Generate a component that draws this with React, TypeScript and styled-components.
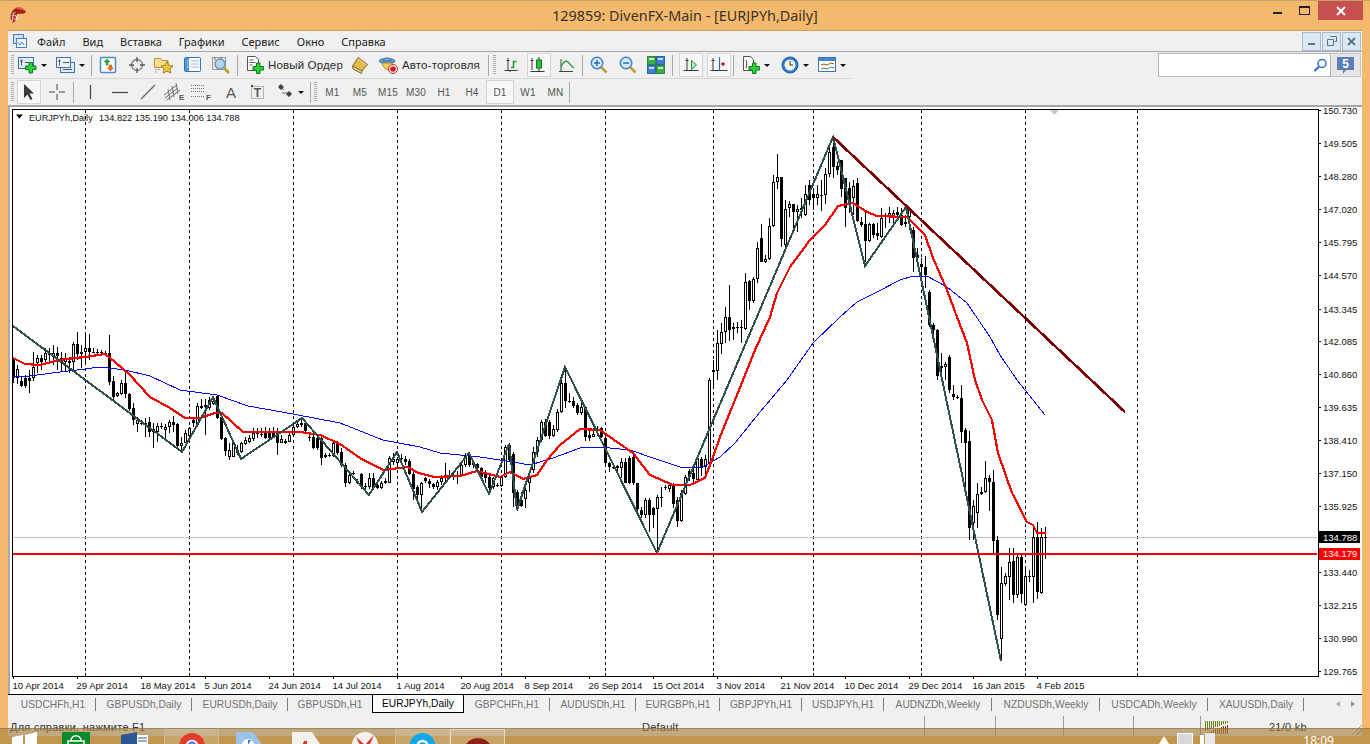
import * as React from 'react'
import { FC, ReactNode } from 'react'
import styled, { createGlobalStyle } from 'styled-components'

const GlobalStyle = createGlobalStyle`
  html, body {
    margin: 0;
    padding: 0;
    overflow: hidden;
    background: #f3b96c;
  }
`

const Page = styled.div`
  position: relative;
  width: 1370px;
  height: 744px;
  overflow: hidden;
  display: flex;
  flex-direction: column;
  background: #f3b96c;
  font-family: "Liberation Sans", Arial, sans-serif;
  color: #222;
`

const TitleBar = styled.header`
  height: 29px;
  flex: none;
  border-top: 1px solid #c9a066;
  display: grid;
  grid-template-columns: 1fr auto 1fr;
  align-items: start;
  padding: 0 7px;
`

const TitleLogo = styled.div`
  padding: 5px 0 0 2px;
`

const TitleText = styled.div`
  font-family: "Noto Sans", sans-serif;
  font-size: 14.4px;
  line-height: 29px;
  color: #3a3128;
`

const WindowButtons = styled.div`
  display: flex;
  justify-content: flex-end;
  align-items: flex-start;
`

const WindowButton = styled.div<{ $close?: boolean }>`
  width: ${p => (p.$close ? 45 : 27)}px;
  height: 19px;
  display: flex;
  align-items: center;
  justify-content: center;
  background: ${p => (p.$close ? '#c75050' : 'transparent')};
`

const AppBody = styled.div`
  height: 706px;
  flex: none;
  margin: 0 8px;
  display: flex;
  flex-direction: column;
  background: #f0f0f0;
`

const MenuBar = styled.nav`
  height: 20px;
  flex: none;
  border-top: 1px solid #c9a066;
  border-bottom: 1px solid #a6a6a6;
  display: flex;
  align-items: center;
  gap: 17px;
  padding: 0 1px 0 5px;
  font-family: "Noto Sans", sans-serif;
  font-size: 11px;
`

const MenuLogo = styled.div`
  display: flex;
  margin-right: -7px;
`

const MdiButtons = styled.div`
  margin-left: auto;
  display: flex;
  gap: 1px;
`

const MdiButton = styled.div`
  width: 17px;
  height: 17px;
  border: 1px solid #a9bccd;
  background: #dbe7f2;
  display: flex;
  align-items: center;
  justify-content: center;
`

const ToolRow = styled.div<{ $h: number }>`
  height: ${p => p.$h}px;
  flex: none;
  display: flex;
  align-items: stretch;
`

const ToolGroup = styled.div<{ $line?: boolean }>`
  display: flex;
  align-items: center;
  border-bottom: ${p => (p.$line ? '1px solid #d6d6d6' : '0')};
`

const Grip = styled.div`
  width: 8px;
  height: 20px;
  flex: none;
  background: repeating-linear-gradient(to bottom, #b0b0b0 0 1px, transparent 1px 2px) 3px 0 / 3px 100% no-repeat;
`

const ToolSep = styled.div<{ $w?: number }>`
  width: ${p => p.$w ?? 2}px;
  height: 21px;
  flex: none;
  display: flex;
  justify-content: center;
  &::after {
    content: '';
    width: 1px;
    background: #a8a8a8;
  }
`

const ToolButton = styled.div<{ $w: number; $pressed?: boolean }>`
  width: ${p => p.$w}px;
  height: 100%;
  flex: none;
  display: flex;
  align-items: center;
  justify-content: center;
  gap: 4px;
  position: relative;
  &::before {
    content: ${p => (p.$pressed ? "''" : 'none')};
    position: absolute;
    inset: 1px ${p => Math.max(0, (p.$w - 24) / 2)}px 1px;
    background: #f6f6f6;
    border: 1px solid #d4d4d4;
    box-shadow: inset 0 0 0 1px #fafafa;
  }
  & > * {
    position: relative;
  }
`

const Caret = styled.span`
  width: 0;
  height: 0;
  border-left: 3px solid transparent;
  border-right: 3px solid transparent;
  border-top: 3px solid #111;
  flex: none;
`

const LabelButton = styled.div<{ $w: number; $pad: number }>`
  width: ${p => p.$w}px;
  padding-left: ${p => p.$pad}px;
  box-sizing: border-box;
  flex: none;
  display: flex;
  align-items: center;
  gap: 4px;
  font-size: 11.5px;
  letter-spacing: 0.15px;
  color: #2a2a2a;
  white-space: nowrap;
`

const PeriodButton = styled.div<{ $w: number; $pressed?: boolean }>`
  width: ${p => p.$w}px;
  height: 24px;
  box-sizing: border-box;
  flex: none;
  display: flex;
  align-items: center;
  justify-content: center;
  font-size: 10px;
  letter-spacing: 0.2px;
  color: #555;
  background: ${p => (p.$pressed ? '#f6f6f6' : 'transparent')};
  border: 1px solid ${p => (p.$pressed ? '#d4d4d4' : 'transparent')};
`

const SearchArea = styled.div`
  margin-left: auto;
  display: flex;
  align-items: stretch;
  padding: 1px 1px 2px 0;
`

const SearchField = styled.div`
  width: 173px;
  box-sizing: border-box;
  background: #fff;
  border: 1px solid #b4b4b4;
  display: flex;
  align-items: center;
  justify-content: flex-end;
  padding-right: 3px;
`

const NotifyButton = styled.div`
  width: 30px;
  box-sizing: border-box;
  background: #e6e6e6;
  border: 1px solid #c4c4c4;
  border-left: 0;
  display: flex;
  align-items: center;
  justify-content: center;
`

const ToolbarEdge = styled.div`
  height: 2px;
  flex: none;
  background: #a6a6a6;
`

const ChartSvg = styled.svg`
  display: block;
  flex: none;
  overflow: visible;
  font-family: "Liberation Sans", Arial, sans-serif;
`

const TabStrip = styled.div`
  height: 21px;
  flex: none;
  display: flex;
  align-items: flex-start;
  border-top: 1px solid #000;
  padding-left: 2px;
  position: relative;
`

const Tab = styled.div<{ $w: number; $active?: boolean; $sep?: boolean }>`
  width: ${p => p.$w}px;
  height: 18px;
  box-sizing: border-box;
  flex: none;
  position: relative;
  display: flex;
  align-items: center;
  justify-content: center;
  font-size: 10.2px;
  letter-spacing: 0.05px;
  white-space: nowrap;
  color: ${p => (p.$active ? '#000' : '#727272')};
  background: ${p => (p.$active ? '#fff' : 'transparent')};
  border: ${p => (p.$active ? '1px solid #000' : '0')};
  border-top: 0;
  &::after {
    content: ${p => (p.$sep ? "''" : 'none')};
    position: absolute;
    right: 0;
    top: 3px;
    bottom: 2px;
    width: 1px;
    background: #7a7a7a;
  }
`

const TabArrows = styled.div`
  margin-left: auto;
  display: flex;
  gap: 11px;
  padding: 6px 7px 0 0;
`

const TabArrow = styled.span<{ $right?: boolean }>`
  width: 0;
  height: 0;
  border-top: 3.5px solid transparent;
  border-bottom: 3.5px solid transparent;
  ${p => (p.$right ? 'border-left: 4px solid #8a8a8a;' : 'border-right: 4px solid #a8a8a8;')}
`

const StatusBar = styled.footer`
  height: 20px;
  flex: none;
  display: flex;
  align-items: stretch;
  position: relative;
  font-size: 11px;
  letter-spacing: 0.25px;
  color: #333;
`

const StatusCell = styled.div<{ $w: number; $pad?: number; $sep?: boolean }>`
  width: ${p => p.$w}px;
  box-sizing: border-box;
  flex: none;
  padding: 3px 0 0 ${p => p.$pad ?? 2}px;
  line-height: 16px;
  display: flex;
  align-items: flex-start;
  white-space: nowrap;
  border-right: ${p => (p.$sep ? '1px solid #9a9a9a' : '0')};
`

const Meter = styled.div`
  display: flex;
  margin-top: 2px;
`

const Traffic = styled.span`
  margin-left: 40px;
`

const ResizeGrip = styled.div`
  position: absolute;
  right: 0;
  bottom: 1px;
  width: 13px;
  height: 13px;
  background: repeating-linear-gradient(135deg, transparent 0 2px, #9d9d9d 2px 3px);
  clip-path: polygon(100% 0, 100% 100%, 0 100%);
`

const Taskbar = styled.div`
  position: absolute;
  left: 0;
  right: 0;
  bottom: 0;
  height: 16px;
  overflow: hidden;
  display: flex;
  align-items: flex-start;
  background: rgba(166, 130, 65, 0.65);
  border-top: 1px solid rgba(120, 90, 50, 0.45);
  box-sizing: border-box;
`

const TaskSlot = styled.div<{ $w: number; $framed?: boolean; $bright?: boolean }>`
  width: ${p => p.$w}px;
  height: 30px;
  box-sizing: border-box;
  flex: none;
  display: flex;
  justify-content: center;
  padding-top: 3px;
  border: ${p => (p.$framed ? `1px solid ${p.$bright ? '#e6d9c4' : '#cdb89a'}` : '0')};
  background: ${p => (p.$framed ? 'rgba(255, 255, 255, 0.14)' : 'transparent')};
`

const Tray = styled.div`
  margin-left: auto;
  display: flex;
  align-items: flex-start;
  gap: 7px;
  padding-right: 36px;
  padding-top: 4px;
`

const Clock = styled.div`
  font-family: "Noto Sans", sans-serif;
  font-size: 12px;
  line-height: 14px;
  color: #fff;
  margin-left: 80px;
  margin-top: 1px;
`

/* ------------ toolbar icons, drawn on an 18 or 20 px box ------------ */

const Ico: FC<{ s?: number; w?: number; children: ReactNode }> = ({ s = 18, w, children }) => (
  <svg width={w ?? s} height={s} viewBox={`0 0 ${w ?? s} ${s}`}>
    {children}
  </svg>
)

const GreenPlus: FC<{ x: number; y: number }> = ({ x, y }) => (
  <path
    transform={`translate(${x} ${y})`}
    d="M4 .5h3.5V4H11v3.5H7.500V11H4V7.500H.5V4H4z"
    fill="#2bd13a"
    stroke="#0c7d1a"
  />
)

const NewChartIcon = () => (
  <Ico w={19}>
    <rect x="0.5" y="1.500" width="15" height="11" fill="#dfeafa" stroke="#3f73b4" />
    <path d="M3.500 3.500v6M2 5h3M7 6.500h6" stroke="#555" fill="none" />
    <GreenPlus x={7} y={6} />
  </Ico>
)

const ProfilesIcon = () => (
  <Ico w={19}>
    <rect x="4.500" y="6.500" width="14" height="10" fill="#dfeafa" stroke="#3f73b4" />
    <rect x="0.5" y="1.500" width="14" height="10" fill="#eef4fc" stroke="#3f73b4" />
    <path d="M3.500 3.500v6M2 5h3M7 6.500h6M7 13.500h9" stroke="#555" fill="none" />
  </Ico>
)

const MarketIcon = () => (
  <Ico>
    <rect x="1.500" y="1.500" width="15" height="15" rx="1" fill="#fff" stroke="#4d8ac8" strokeWidth="1.500" />
    <path d="M7 9V6H5l3-3 3 3H9v3z" fill="#23b53a" stroke="#14802a" strokeWidth=".5" />
    <path d="M10 9v3H8.500l3 3 3-3H13V9z" fill="#f0732a" stroke="#c04e10" strokeWidth=".5" />
  </Ico>
)

const NavIcon = () => (
  <Ico>
    <circle cx="9" cy="9" r="5.500" fill="none" stroke="#777" strokeWidth="1.300" />
    <path d="M9 1v5M9 12v5M1 9h5M12 9h5" stroke="#555" strokeWidth="1.300" />
  </Ico>
)

const FavIcon = () => (
  <Ico w={20}>
    <path d="M.5 2.500h6l1.500 2h6v7H.5z" fill="#f7dc8c" stroke="#b8923a" />
    <path d="M2 13v1M2 15.500v1M5 13v1" stroke="#666" />
    <path d="M13 5.500l1.900 3.900 4.100.6-3 2.900.7 4.200-3.700-2-3.700 2 .7-4.200-3-2.900 4.100-.6z" fill="#f2c63a" stroke="#a67f1e" />
  </Ico>
)

const DataIcon = () => (
  <Ico w={17}>
    <rect x="0.5" y="1.500" width="16" height="14" rx="1" fill="#fff" stroke="#2d73bd" />
    <rect x="1" y="2" width="4" height="13" fill="#4f97d8" />
    <path d="M7 5h8M7 8h8M7 11h8" stroke="#9ab7d6" />
    <path d="M3 5h1M3 8h1M3 11h1" stroke="#fff" />
  </Ico>
)

const TesterIcon = () => (
  <Ico w={19}>
    <rect x="0.5" y="1.500" width="13" height="12" fill="#f1e9dc" stroke="#9a9a9a" />
    <path d="M3 1v3M9 1v3" stroke="#777" />
    <circle cx="8" cy="8" r="5" fill="#b6d3ee" stroke="#6f94b8" strokeWidth="1.500" />
    <path d="M12 12l5 5" stroke="#c59a2c" strokeWidth="2.500" />
  </Ico>
)

const OrderIcon = () => (
  <Ico w={17}>
    <path d="M.5.5h8l3 3v11h-11z" fill="#fff" stroke="#555" />
    <path d="M2.500 4h4M2.500 6.500h6M2.500 9h3" stroke="#555" />
    <GreenPlus x={5.500} y={6.500} />
  </Ico>
)

const BookIcon = () => (
  <Ico>
    <path d="M1.500 10l.5 3 8.500 4.500 .5-2.500" fill="#d6d0b4" stroke="#8c6a1e" />
    <path d="M7 1.500l9.500 7-5.500 6.500L1.500 10z" fill="#e2b94e" stroke="#8c6a1e" />
    <path d="M7 3l7.500 5.500" stroke="#f4dc94" />
  </Ico>
)

const HatIcon = () => (
  <Ico w={19}>
    <ellipse cx="8" cy="5" rx="8" ry="2.500" fill="#5f9ed6" stroke="#3b6fa6" />
    <path d="M4 5c0-4 8-4 8 0z" fill="#6fa9dd" stroke="#3b6fa6" />
    <path d="M3 7c1 7 9 9 13 5l-3-5z" fill="#f3cf58" stroke="#a8862a" />
    <circle cx="14" cy="13" r="4.500" fill="#fff" stroke="#c22" />
    <circle cx="14" cy="13" r="2.800" fill="#d0201c" />
  </Ico>
)

const BarTypeIcon = () => (
  <Ico>
    <path d="M5 2v12M1.500 14.500h13M3.500 4.500h3M7 14v2" stroke="#3a3a3a" fill="none" />
    <path d="M8 11.500h2.500v-6h3" stroke="#1a9a2c" strokeWidth="1.500" fill="none" />
  </Ico>
)

const CandleTypeIcon = () => (
  <Ico>
    <path d="M2 2v12M.5 15.500h14M0.500 4.500h3" stroke="#3a3a3a" fill="none" />
    <path d="M9 1v15" stroke="#222" />
    <rect x="6.500" y="4" width="5" height="8" fill="#28c13c" stroke="#0f7c20" />
  </Ico>
)

const LineTypeIcon = () => (
  <Ico>
    <path d="M3 3v12M1 15.500h14" stroke="#3a4a3a" fill="none" />
    <path d="M3 11c2-5 5-7 7-5s3 4 6 6" stroke="#2b9c46" strokeWidth="1.300" fill="none" />
  </Ico>
)

const Lens: FC<{ plus?: boolean }> = ({ plus }) => (
  <Ico>
    <path d="M10.500 10.500l6 6" stroke="#c79a2a" strokeWidth="2.500" />
    <circle cx="7" cy="7" r="5.700" fill="#d8e9fa" stroke="#3f86cf" strokeWidth="1.600" />
    <path d={plus ? 'M4 7h6M7 4v6' : 'M4 7h6'} stroke="#2a6bb5" strokeWidth="1.500" />
  </Ico>
)

const TileIcon = () => (
  <Ico>
    <rect x="0.5" y="0.5" width="8" height="8" fill="#3fae4a" stroke="#2a8a36" />
    <rect x="9.500" y="0.5" width="8" height="8" fill="#3f7fd2" stroke="#2a62ad" />
    <rect x="0.5" y="9.500" width="8" height="8" fill="#3f7fd2" stroke="#2a62ad" />
    <rect x="9.500" y="9.500" width="8" height="8" fill="#3fae4a" stroke="#2a8a36" />
    <path d="M2 3h5M11 3h5M2 12h5M11 12h5" stroke="#fff" strokeWidth="1.500" />
  </Ico>
)

const ScrollIcon = () => (
  <Ico>
    <path d="M5 2v12M1.500 14.500h15M3.500 4.500h3" stroke="#3a3a3a" fill="none" />
    <path d="M9.500 4.500l5 4.500-5 4.500z" fill="#b9efc0" stroke="#189a2e" />
  </Ico>
)

const ShiftIcon = () => (
  <Ico>
    <path d="M3 2v12M.5 14.500h17M1.500 4.500h3" stroke="#3a3a3a" fill="none" />
    <path d="M9.500 1v14" stroke="#2d6fbf" strokeWidth="1.200" />
    <path d="M11 8h4M13 6v4" stroke="#b4281e" strokeWidth="1.500" />
  </Ico>
)

const AddIndicatorIcon = () => (
  <Ico w={17}>
    <path d="M.5.5h7l3 3v11H.5z" fill="#fff" stroke="#555" />
    <path d="M3 4c1 2 1 5 0 8" stroke="#333" fill="none" />
    <GreenPlus x={5.500} y={6.500} />
  </Ico>
)

const ClockIcon = () => (
  <Ico>
    <circle cx="9" cy="9" r="8" fill="#2a80d0" stroke="#1a5a9e" />
    <circle cx="9" cy="9" r="5.500" fill="#f7f2e6" />
    <path d="M9 5v4h3" stroke="#333" fill="none" />
  </Ico>
)

const TemplateIcon = () => (
  <Ico>
    <rect x="0.5" y="1.500" width="17" height="14" fill="#fff" stroke="#3f73b4" />
    <rect x="1" y="2" width="16" height="3" fill="#3f86cf" />
    <path d="M3 9l3-1 3 1 4-2 3 1" stroke="#b5431e" fill="none" />
    <path d="M3 13l3-1 3 1 4-2 3 1" stroke="#2b9c46" fill="none" />
  </Ico>
)

const CursorIcon = () => (
  <Ico>
    <path d="M4 1v14l3.500-3.500 3 5.500 2-1-3-5.500H14z" fill="#3a3a3a" />
  </Ico>
)

const CrossIcon = () => (
  <Ico>
    <path d="M9 1v6M9 11v6M1 9h6M11 9h6" stroke="#444" />
  </Ico>
)

const VLineIcon = () => (
  <Ico>
    <path d="M9.500 2v14" stroke="#444" strokeWidth="1.200" />
  </Ico>
)

const HLineIcon = () => (
  <Ico>
    <path d="M1 9.500h16" stroke="#444" strokeWidth="1.200" />
  </Ico>
)

const TrendIcon = () => (
  <Ico>
    <path d="M2 16L16 2" stroke="#666" strokeWidth="1.200" />
  </Ico>
)

const FibChannelIcon = () => (
  <Ico w={24} s={20}>
    <path d="M2 13L15 3M3 16L16 6M5 18L18 8" stroke="#666" />
    <path d="M6 7l2 11M10 4l2 11M14 1l2 11" stroke="#777" />
    <text x="17" y="18" fontSize="8" fontWeight="700" fill="#555" fontFamily="Liberation Sans">E</text>
  </Ico>
)

const FibLinesIcon = () => (
  <Ico w={22} s={20}>
    <path d="M0 3.500h14M0 6.500h14M0 9.500h14M0 14.500h14" stroke="#777" strokeDasharray="1 1" />
    <text x="15" y="18" fontSize="8" fontWeight="700" fill="#555" fontFamily="Liberation Sans">F</text>
  </Ico>
)

const LetterIcon = () => (
  <Ico>
    <text x="9" y="15" textAnchor="middle" fontSize="15" fontWeight="400" fill="#555" fontFamily="Liberation Sans">A</text>
  </Ico>
)

const LabelIcon = () => (
  <Ico>
    <rect x="2.500" y="3.500" width="12" height="12" fill="none" stroke="#777" strokeDasharray="1 1" />
    <path d="M2 2h2v2H2z" fill="#444" />
    <text x="8.500" y="14" textAnchor="middle" fontSize="12" fontWeight="700" fill="#555" fontFamily="Liberation Sans">T</text>
  </Ico>
)

const MoreToolsIcon = () => (
  <Ico w={16}>
    <path d="M1 2l5 5M4 10h9" stroke="#666" strokeWidth="1" />
    <path d="M3 1l3 3-3 3-3-3zM11 8l3 3-3 3-3-3z" fill="#444" />
  </Ico>
)

const MtLogo = () => (
  <svg width="18" height="19" viewBox="0 0 18 19">
    <path d="M3 6C5 1 13 0 17 6c-3 3-6 1-9 2 0 4-2 8-4 9C1 14 1 10 3 6z" fill="#a8201c" />
    <path d="M6 2c3-2 8-1 10 3-3-1-7-2-10-3z" fill="#d9605a" />
    <text x="2.500" y="14" fontSize="10" fontStyle="italic" fill="#fff" fontFamily="Liberation Serif">fx</text>
  </svg>
)

const ChildWinIcon = () => (
  <svg width="14" height="15" viewBox="0 0 14 15">
    <rect x="0.5" y="0.5" width="10" height="9" fill="#cfe0f4" stroke="#4a7fbe" />
    <rect x="3.500" y="4.500" width="10" height="9" fill="#eef4fb" stroke="#4a7fbe" />
    <path d="M5 9l2 2 2-3 2 3" stroke="#4a7fbe" fill="none" />
  </svg>
)

const SearchGlass = () => (
  <svg width="14" height="15" viewBox="0 0 14 15">
    <circle cx="9" cy="5.500" r="4" fill="#fff" stroke="#2f6fd0" strokeWidth="1.500" />
    <path d="M6 8.500L1.500 13" stroke="#2f6fd0" strokeWidth="2.200" />
  </svg>
)

const NotifyBubble = () => (
  <svg width="17" height="19" viewBox="0 0 17 19">
    <path d="M0 1h17v13H9l-3 4v-4H0z" fill="#5b7db8" />
    <text x="8.500" y="11.500" textAnchor="middle" fontSize="12" fontWeight="700" fill="#fff" fontFamily="Liberation Sans">5</text>
  </svg>
)

const BarsMeter = () => (
  <svg width="24" height="13" viewBox="0 0 24 13" shapeRendering="crispEdges">
    {Array.from({ length: 12 }, (_, i) => (
      <g key={i}>
        <rect x={i * 2} y="0" width="1" height={Math.max(2, 10 - i * 0.75)} fill="#5f7f10" />
        <rect x={i * 2} y={12 - i * 0.75} width="1" height={i * 0.75 + 1} fill="#9c2c10" />
      </g>
    ))}
  </svg>
)

/* ------------ chart data, read off the capture in real pixels ------------ */

type Row = [number, number, number, number, number]

// [body top, body bottom, high, low, black] in thirds of a pixel from a base line
const firstLeg: Row[] = [
  [150,205,145,218,1],[178,205,165,222,0],[213,228,200,232,1],[205,228,195,235,1],[203,213,180,248,1],[170,205,125,213,0],
  [145,160,135,190,0],[145,155,135,180,1],[130,150,115,160,0],[130,135,115,160,0],[130,137,105,165,0],[130,138,110,180,1],
  [145,155,125,183,1],[148,155,130,185,0],[152,160,140,190,1],[103,157,95,185,0],[103,133,67,150,1],[125,133,105,175,0],
  [115,125,75,155,0],[115,125,72,150,1],[125,125,115,130,1],[125,130,118,135,1],[127,127,120,133,1],[130,130,122,136,1],
  [130,215,75,225,1],[213,262,198,275,1],[250,258,245,262,0],[218,252,210,255,0],[218,252,190,265,1],[252,298,250,303,1],
  [295,330,280,345,1],[330,342,322,365,0],[340,340,330,346,1],[340,345,325,380,1],[335,365,320,382,1],[358,365,340,415,1],
  [348,365,340,395,0],[347,347,340,356,1],[350,360,342,385,0],[337,350,330,370,0],[337,345,318,365,1],[342,408,340,410,1],
  [398,408,380,425,0],[368,398,360,400,0],[355,378,350,380,0],[330,340,320,350,1],[288,345,280,348,0],[288,293,268,296,0],
  [285,292,268,375,1],[270,295,262,300,0],[272,282,262,286,0],[257,325,255,328,1],[320,388,305,390,1],[385,422,380,437,1],
  [420,440,400,450,0],[400,440,392,442,0],[420,430,405,436,1],[400,427,395,430,0],[390,402,380,405,0],[385,395,375,400,0],
  [368,388,355,392,0],[365,372,355,385,0],[372,372,355,380,1],[365,383,352,386,1],[370,385,355,388,1],[365,380,352,384,1],
  [365,398,355,435,1],[388,398,375,400,0],[393,400,388,402,0],[375,395,370,397,0],[350,375,342,378,0],[342,352,335,355,0],
  [340,345,320,350,0],[340,362,336,365,1],[380,385,372,392,1],[380,415,376,418,1],[385,415,380,420,1],[385,445,382,465,1],
  [435,442,428,445,0],[435,435,430,440,1],[400,438,392,441,0],[400,430,392,435,1],
]

const secondLeg: Row[] = [
  [305,345,295,350,1],[345,398,340,410,1],[375,400,368,403,0],[370,370,362,376,1],[395,395,388,402,1],[372,412,370,416,1],
  [408,412,400,420,1],[385,412,370,416,0],[385,415,368,418,1],[405,415,398,418,1],[400,415,392,418,0],[392,398,385,402,0],
  [325,398,318,400,0],[328,335,310,345,0],[328,340,322,345,0],[325,325,312,340,1],[328,335,318,345,1],[333,372,328,376,1],
  [372,418,366,450,1],[412,435,405,452,1],[400,435,395,480,0],[385,392,382,400,1],[392,403,388,415,1],[403,410,400,418,1],
  [395,410,390,420,0],[385,395,375,405,0],[375,385,338,398,0],[375,375,360,385,1],[378,378,365,390,1],[378,378,362,402,1],
  [345,375,340,380,0],[315,345,310,350,0],[313,345,308,352,1],[340,345,335,355,1],[343,355,338,365,1],[355,380,350,392,1],
  [365,385,360,400,1],[380,415,376,432,1],[385,410,380,416,0],[405,405,400,410,1],[382,408,378,412,0],[290,382,285,385,0],
  [285,330,280,336,1],[312,428,305,470,1],[425,470,420,482,1],[450,468,425,472,1],[420,448,415,475,0],[385,400,378,425,0],
  [305,360,292,370,0],[270,305,262,320,0],[215,270,210,275,0],[215,258,208,262,1],[215,258,210,268,1],[238,258,225,262,0],
  [185,240,178,245,0],[100,185,80,190,0],[100,152,50,175,1],[152,152,130,158,1],[152,168,140,175,1],[165,188,158,195,1],
  [170,188,160,195,0],[170,262,168,272,1],[255,263,235,272,1],[252,260,235,262,0],[240,240,228,258,1],[235,260,230,265,1],
  [265,340,250,345,1],[340,350,335,365,1],[350,350,342,358,1],[348,355,345,375,1],[335,355,325,385,0],[335,398,325,400,1],
  [325,398,318,402,1],[322,400,315,405,1],[400,478,398,482,1],[480,495,472,505,1],[450,495,445,505,0],[450,495,445,545,1],
  [475,495,470,535,1],[442,478,435,600,0],[440,440,412,470,1],[412,412,405,420,1],[405,418,395,425,0],[405,463,398,475,1],
  [450,512,440,530,1],[430,512,420,516,0],[380,432,375,436,0],[362,380,358,392,1],[370,388,355,400,1],[325,390,320,394,0],
  [328,350,320,378,1],[328,352,315,380,0],[90,340,85,350,0],[60,65,30,112,0],
]

const thirdLeg: Row[] = [
  [640,722,600,750,0],[605,643,580,672,0],[560,607,530,640,0],[560,600,465,632,1],[590,598,580,630,0],[590,590,575,610,1],
  [590,590,570,638,1],[455,597,428,600,0],[453,512,450,540,1],[448,512,440,520,0],[355,448,335,460,0],[325,395,283,395,1],
  [388,395,375,398,0],[287,388,265,390,0],[155,287,135,290,0],[140,155,72,177,0],[140,328,140,350,1],[237,345,210,360,0],
  [222,235,213,260,0],[222,245,222,300,1],[238,245,225,305,0],[235,240,205,265,1],[193,255,165,258,0],[165,210,150,225,1],
  [193,205,175,240,1],[193,203,165,225,0],[195,195,150,242,1],[133,195,115,222,0],[65,133,45,140,0],[50,110,22,145,1],
  [108,120,95,135,1],[90,177,90,200,1],[145,235,145,290,1],[175,225,155,250,1],[168,205,150,255,0],[160,272,145,275,1],
  [275,285,262,290,1],[283,333,245,395,1],[283,333,280,335,0],[283,315,280,325,1],[310,318,280,330,1],[265,322,235,325,0],
  [258,262,250,295,1],[250,258,232,280,0],[250,258,240,285,0],[247,255,232,265,1],[255,285,235,288,1],[275,283,255,290,1],
  [240,262,230,300,0],[300,383,290,425,1],[375,383,355,400,1],[402,412,385,470,1],[412,435,378,475,1],[487,585,480,590,1],
  [585,600,580,630,1],[600,738,598,750,1],[708,714,670,750,0],[703,712,695,750,0],
]

const lastLeg: Row[] = [
  [-70,30,-75,40,1],[43,52,15,60,1],[50,53,45,58,1],[55,155,15,190,1],[150,190,145,330,1],[183,445,153,480,1],
  [378,430,360,480,0],[343,400,310,445,0],[335,343,320,345,0],[295,337,243,340,0],[295,307,285,392,1],[306,482,270,520,1],
  [480,705,468,720,1],[610,778,560,843,0],[588,612,580,618,0],[545,590,505,660,0],[543,645,505,668,1],[531,645,520,655,0],
  [531,643,520,668,1],[588,675,568,678,0],[588,590,570,605,1],[471,590,440,668,0],[471,637,427,657,1],[471,638,445,642,0],
  [471,473,440,536,1],
]

const fromThirds = (base: number, rows: Row[]) =>
  rows.map(([t, b, h, l, k]) => ({
    top: Math.round(base + t / 3),
    bottom: Math.round(base + b / 3),
    high: Math.round(base + h / 3),
    low: Math.round(base + l / 3),
    black: k === 1,
  }))

const candles = [
  ...fromThirds(310, firstLeg),
  ...fromThirds(350, secondLeg),
  ...fromThirds(130, thirdLeg),
  ...fromThirds(380, lastLeg),
]

const toPoints = (pts: number[][]) => pts.map(p => p.join(',')).join(' ')

const zigzag = [
  [13,326],[182,452],[213,397],[241,459],[302,418],[369,495],[397,452],[422,512],[469,453],[489,494],[509,444],[517,510],
  [565,367],[657,553],[833,137],[865,266],[906,207],[1001,661],
]

const fastMa = [
  [13,358],[25,364],[40,365],[60,360],[75,358],[85,357],[105,354],[115,362],[130,375],[150,397],[170,408],[185,418],
  [200,418],[215,413],[222,413],[243,432],[277,432],[300,432],[320,435],[340,444],[360,458],[383,470],[408,467],[418,473],
  [435,477],[460,476],[477,471],[500,477],[510,472],[523,479],[537,475],[547,460],[560,445],[580,429],[600,430],[617,442],
  [633,453],[650,475],[673,485],[690,485],[705,478],[713,457],[720,437],[743,380],[755,350],[770,317],[777,293],[790,267],
  [810,240],[825,225],[838,206],[853,203],[867,212],[877,216],[907,217],[925,235],[933,258],[947,290],[957,317],[967,343],
  [975,380],[982,400],[992,420],[998,453],[1012,493],[1027,522],[1033,525],[1037,533],[1046,533],
]

const slowMa = [
  [13,377],[30,376],[60,372],[85,369],[100,367],[125,370],[150,376],[180,390],[217,395],[248,406],[293,414],[340,423],
  [383,440],[420,447],[440,453],[480,457],[513,462],[530,465],[553,458],[580,448],[600,447],[630,450],[653,458],[680,467],
  [703,467],[720,457],[735,443],[760,412],[787,380],[813,343],[840,317],[857,302],[877,292],[900,280],[913,276],[927,276],
  [947,287],[967,303],[990,337],[1000,355],[1017,380],[1045,415],
]

const gridX = [85, 189, 293, 397, 501, 605, 713, 813, 921, 1025, 1137]

const priceLabels: [string, number][] = [
  ['150.730',110],['149.505',143],['148.280',176],['147.020',209],['145.795',242],['144.570',275],['143.345',309],
  ['142.085',341],['140.860',374],['139.635',407],['138.410',440],['137.150',473],['135.925',506],['133.440',572],
  ['132.215',605],['130.990',638],['129.765',671],
]

const dateLabels: [string, number][] = [
  ['10 Apr 2014',12],['29 Apr 2014',76],['18 May 2014',140],['5 Jun 2014',204],['24 Jun 2014',268],['14 Jul 2014',332],
  ['1 Aug 2014',396],['20 Aug 2014',460],['8 Sep 2014',524],['26 Sep 2014',588],['15 Oct 2014',652],['3 Nov 2014',716],
  ['21 Nov 2014',780],['10 Dec 2014',844],['29 Dec 2014',908],['16 Jan 2015',972],['4 Feb 2015',1036],
]

const Chart: FC = () => (
  <ChartSvg width="1354" height="587" viewBox="8 107 1354 587">
    <rect x="8" y="107" width="1354" height="587" fill="#fff" />
    <rect x="8" y="107" width="2" height="587" fill="#a9a9a9" />
    <g shapeRendering="crispEdges">
      {gridX.map(x => (
        <line key={x} x1={x + 0.5} x2={x + 0.5} y1="110" y2="675" stroke="#000" strokeDasharray="3 3" />
      ))}
      <line x1="13" x2="1317" y1="537.500" y2="537.500" stroke="#c0c0c0" />
      {candles.map((c, i) => {
        const x = 13 + i * 4
        const h = Math.max(1, c.bottom - c.top)
        return (
          <g key={i}>
            <rect x={x} y={c.high} width="1" height={c.low - c.high} fill="#000" />
            <rect x={x - 1} y={c.top} width="3" height={h} fill="#000" />
            {!c.black && h > 2 && <rect x={x} y={c.top + 1} width="1" height={h - 2} fill="#fff" />}
          </g>
        )
      })}
      <polyline points={toPoints(slowMa)} fill="none" stroke="#0000ff" strokeWidth="1" />
      <polyline points={toPoints(fastMa)} fill="none" stroke="#ff0000" strokeWidth="2.200" />
      <polyline points={toPoints(zigzag)} fill="none" stroke="#2f4f4f" strokeWidth="2" />
      <line x1="833" y1="137" x2="1125" y2="412" stroke="#800000" strokeWidth="2.600" />
      <rect x="13" y="553" width="1304" height="2" fill="#ff0000" />
      <rect x="12" y="109" width="1306" height="567" fill="none" stroke="#000" />
      {priceLabels.map(([, y]) => (
        <rect key={y} x="1318" y={y} width="3" height="1" fill="#000" />
      ))}
      {dateLabels.map(([, x]) => (
        <rect key={x} x={x + 1} y="676" width="1" height="3" fill="#000" />
      ))}
      {gridX.map(x => (
        <rect key={x} x={x} y="673" width="1" height="3" fill="#000" />
      ))}
      <rect x="1319" y="531" width="41" height="12" fill="#000" />
      <rect x="1319" y="548" width="41" height="12" fill="#ff0000" />
    </g>
    <path d="M1050 110h9l-4.500 5z" fill="#c8c8c8" />
    <path d="M16 114.500h7l-3.500 4z" fill="#000" />
    <g fontSize="9.500" fill="#111">
      <text x="29" y="121" fontSize="9.100">EURJPYh,Daily</text>
      <text x="99" y="121" fontSize="9.200">134.822 135.190 134.006 134.788</text>
      {priceLabels.map(([label, y]) => (
        <text key={label} x="1323" y={y + 3.500}>{label}</text>
      ))}
      {dateLabels.map(([label, x]) => (
        <text key={label} x={x + 0.5} y="689">{label}</text>
      ))}
      <text x="1323" y="540.500" fill="#fff">134.788</text>
      <text x="1323" y="557" fill="#fff">134.179</text>
    </g>
  </ChartSvg>
)

const tabs: [string, number, boolean?][] = [
  ['USDCHFh,H1',86],['GBPUSDh,Daily',96],['EURUSDh,Daily',96],['GBPUSDh,H1',84],['EURJPYh,Daily',92,true],['GBPCHFh,H1',86],
  ['AUDUSDh,H1',86],['EURGBPh,H1',84],['GBPJPYh,H1',82],['USDJPYh,H1',82],['AUDNZDh,Weekly',108],['NZDUSDh,Weekly',108],
  ['USDCADh,Weekly',108],['XAUUSDh,Daily',96],
]

const menuItems = ['Файл', 'Вид', 'Вставка', 'Графики', 'Сервис', 'Окно', 'Справка']

const periods: [string, number, boolean?][] = [
  ['M1',27],['M5',28],['M15',28],['M30',28],['H1',28],['H4',28],['D1',28,true],['W1',28],['MN',27],
]

const App: FC = () => (
  <Page>
    <GlobalStyle />
    <TitleBar>
      <TitleLogo>
        <MtLogo />
      </TitleLogo>
      <TitleText>129859: DivenFX-Main - [EURJPYh,Daily]</TitleText>
      <WindowButtons>
        <WindowButton>
          <svg width="9" height="9" viewBox="0 0 9 9"><rect y="6" width="9" height="2" fill="#222" /></svg>
        </WindowButton>
        <WindowButton>
          <svg width="11" height="9" viewBox="0 0 11 9"><rect x=".5" y="1" width="10" height="7.500" fill="none" stroke="#222" /><rect width="11" height="2" fill="#222" /></svg>
        </WindowButton>
        <WindowButton $close>
          <svg width="10" height="10" viewBox="0 0 10 10"><path d="M1 1l8 8M9 1l-8 8" stroke="#fff" strokeWidth="2" /></svg>
        </WindowButton>
      </WindowButtons>
    </TitleBar>

    <AppBody>
      <MenuBar>
        <MenuLogo><ChildWinIcon /></MenuLogo>
        {menuItems.map(m => <span key={m}>{m}</span>)}
        <MdiButtons>
          <MdiButton>
            <svg width="9" height="9" viewBox="0 0 9 9"><rect x="1" y="6" width="7" height="2" fill="#5a7388" /></svg>
          </MdiButton>
          <MdiButton>
            <svg width="10" height="10" viewBox="0 0 10 10"><path d="M3.500.5h6v5h-2M.5 3.500h6v6h-6z" fill="none" stroke="#5a7388" /></svg>
          </MdiButton>
          <MdiButton>
            <svg width="9" height="9" viewBox="0 0 9 9"><path d="M1 1l7 7M8 1L1 8" stroke="#5a7388" strokeWidth="1.800" /></svg>
          </MdiButton>
        </MdiButtons>
      </MenuBar>

      <ToolRow $h={27}>
        <ToolGroup $line>
          <Grip />
          <ToolButton $w={33}><NewChartIcon /><Caret /></ToolButton>
          <ToolButton $w={42}><ProfilesIcon /><Caret /></ToolButton>
          <ToolSep $w={1} />
          <ToolButton $w={32}><MarketIcon /></ToolButton>
          <ToolButton $w={26}><NavIcon /></ToolButton>
          <ToolButton $w={28}><FavIcon /></ToolButton>
          <ToolButton $w={28}><DataIcon /></ToolButton>
          <ToolButton $w={30}><TesterIcon /></ToolButton>
          <ToolSep />
          <LabelButton $w={109} $pad={9}><OrderIcon />Новый Ордер</LabelButton>
          <ToolButton $w={26}><BookIcon /></ToolButton>
          <LabelButton $w={113} $pad={6}><HatIcon />Авто-торговля</LabelButton>
          <ToolSep $w={4} />
          <Grip />
          <ToolButton $w={27}><BarTypeIcon /></ToolButton>
          <ToolButton $w={28} $pressed><CandleTypeIcon /></ToolButton>
          <ToolButton $w={28}><LineTypeIcon /></ToolButton>
          <ToolSep $w={3} />
          <ToolButton $w={30}><Lens plus /></ToolButton>
          <ToolButton $w={28}><Lens /></ToolButton>
          <ToolButton $w={28}><TileIcon /></ToolButton>
          <ToolSep $w={4} />
          <ToolButton $w={33} $pressed><ScrollIcon /></ToolButton>
          <ToolButton $w={24} $pressed><ShiftIcon /></ToolButton>
          <ToolSep $w={5} />
          <ToolButton $w={40}><AddIndicatorIcon /><Caret /></ToolButton>
          <ToolButton $w={37}><ClockIcon /><Caret /></ToolButton>
          <ToolButton $w={38}><TemplateIcon /><Caret /></ToolButton>
        </ToolGroup>
        <SearchArea>
          <SearchField><SearchGlass /></SearchField>
          <NotifyButton><NotifyBubble /></NotifyButton>
        </SearchArea>
      </ToolRow>

      <ToolRow $h={26}>
        <ToolGroup>
          <Grip />
          <ToolButton $w={25} $pressed><CursorIcon /></ToolButton>
          <ToolButton $w={32}><CrossIcon /></ToolButton>
          <ToolSep $w={1} />
          <ToolButton $w={32}><VLineIcon /></ToolButton>
          <ToolButton $w={28}><HLineIcon /></ToolButton>
          <ToolButton $w={28}><TrendIcon /></ToolButton>
          <ToolButton $w={24}><FibChannelIcon /></ToolButton>
          <ToolButton $w={32}><FibLinesIcon /></ToolButton>
          <ToolButton $w={26}><LetterIcon /></ToolButton>
          <ToolButton $w={28}><LabelIcon /></ToolButton>
          <ToolButton $w={38}><MoreToolsIcon /><Caret /></ToolButton>
          <ToolSep $w={1} />
          <Grip />
          {periods.map(([label, w, pressed]) => (
            <PeriodButton key={label} $w={w} $pressed={pressed}>{label}</PeriodButton>
          ))}
          <ToolSep $w={1} />
        </ToolGroup>
      </ToolRow>
      <ToolbarEdge />

      <Chart />

      <TabStrip>
        {tabs.map(([label, w, active], i) => (
          <Tab key={label} $w={w} $active={active} $sep={!active && tabs[i + 1]?.[2] !== true}>{label}</Tab>
        ))}
        <TabArrows><TabArrow /><TabArrow $right /></TabArrows>
      </TabStrip>

      <StatusBar>
        <StatusCell $w={632}>Для справки, нажмите F1</StatusCell>
        <StatusCell $w={285} $pad={2} $sep>Default</StatusCell>
        <StatusCell $w={71} $sep />
        <StatusCell $w={68} $sep />
        <StatusCell $w={70} $sep />
        <StatusCell $w={67} $sep />
        <StatusCell $w={159} $pad={4}>
          <Meter><BarsMeter /></Meter>
          <Traffic>21/0 kb</Traffic>
        </StatusCell>
        <ResizeGrip />
      </StatusBar>
    </AppBody>

    <Taskbar>
      <TaskSlot $w={48}>
        <svg width="25" height="14" viewBox="0 0 25 14"><path d="M0 5l11-2v11H0zM13 3l12-3v14H13z" fill="#fff" /></svg>
      </TaskSlot>
      <TaskSlot $w={56}>
        <svg width="28" height="14" viewBox="0 0 28 14"><rect width="28" height="14" fill="#0a8a2a" /><path d="M9 9c0-7 10-7 10 0M6 9h16v5H6z" fill="none" stroke="#fff" strokeWidth="1.500" /></svg>
      </TaskSlot>
      <TaskSlot $w={60}>
        <svg width="27" height="14" viewBox="0 0 27 14"><path d="M0 3l16-3v14H0z" fill="#2b5797" /><rect x="16" y="3" width="11" height="11" fill="#fff" /><path d="M17 6h9M17 9h9" stroke="#2b5797" /></svg>
      </TaskSlot>
      <TaskSlot $w={55} $framed>
        <svg width="26" height="24" viewBox="0 0 26 24"><circle cx="13" cy="13" r="13" fill="#e33b2e" /><path d="M13 13L2 20a13 13 0 0 0 20 3z" fill="#2fa84f" /><path d="M13 13h13a13 13 0 0 1-4 10z" fill="#f7c52b" /><circle cx="13" cy="13" r="5.500" fill="#4b8bf5" stroke="#fff" strokeWidth="1.500" /></svg>
      </TaskSlot>
      <TaskSlot $w={58}>
        <svg width="28" height="24" viewBox="0 0 28 24"><path d="M2 0h17l9 12v12H2z" fill="#9cc3ea" /><circle cx="14" cy="13" r="6" fill="#fff" /><path d="M14 13V8h3z" fill="#3a78c0" /></svg>
      </TaskSlot>
      <TaskSlot $w={58}>
        <svg width="28" height="24" viewBox="0 0 28 24"><path d="M0 0h20l8 12v12H0z" fill="#f5f2ee" /><path d="M10 14l2-5h3v9h-2v-3h-2l-2 3H7z" fill="#e0352b" /></svg>
      </TaskSlot>
      <TaskSlot $w={60}>
        <svg width="26" height="24" viewBox="0 0 26 24"><circle cx="13" cy="13" r="13" fill="#f5f2ee" /><path d="M4 5l9 8 9-10-7 16h-4z" fill="#e0352b" /></svg>
      </TaskSlot>
      <TaskSlot $w={55} $framed>
        <svg width="27" height="24" viewBox="0 0 27 24"><circle cx="13.500" cy="13" r="13" fill="#10a8e8" /><circle cx="13.500" cy="13" r="5" fill="none" stroke="#fff" strokeWidth="2.500" /></svg>
      </TaskSlot>
      <TaskSlot $w={55} $framed $bright>
        <svg width="27" height="24" viewBox="0 0 27 24"><path d="M1 14C4 3 22 2 27 13c-6 5-10 2-14 3l-4 8C5 22 0 20 1 14z" fill="#8e1f1a" /></svg>
      </TaskSlot>
      <Tray>
        <svg width="12" height="12" viewBox="0 0 12 12"><path d="M6 3l5 8H1z" fill="#fff" /></svg>
        <svg width="16" height="12" viewBox="0 0 16 12"><rect x=".5" y=".5" width="15" height="11" fill="#d9d9d9" stroke="#fff" /></svg>
        <svg width="16" height="12" viewBox="0 0 16 12"><rect x="0" y="2" width="4" height="10" fill="#fff" /><rect x="5" y="0" width="10" height="12" fill="#e8e8e8" /></svg>
        <Clock>18:09</Clock>
      </Tray>
    </Taskbar>
  </Page>
)

export default App
